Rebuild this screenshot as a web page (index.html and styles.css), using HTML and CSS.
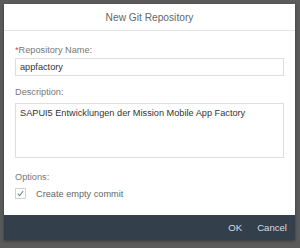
FILE: index.html
```
<!doctype html>
<html>
<head>
<meta charset="utf-8">
<title>New Git Repository</title>
<link rel="stylesheet" href="styles.css">
</head>
<body>
<div class="dialog">
	<div class="header">New Git Repository</div>
	<div class="content">
		<label class="label"><span class="req">*</span>Repository Name:</label>
		<div class="input">appfactory</div>
		<label class="label">Description:</label>
		<div class="textarea">SAPUI5 Entwicklungen der Mission Mobile App Factory</div>
		<label class="label">Options:</label>
		<div class="check">
			<span class="box">
				<svg width="9" height="9" viewBox="0 0 9 9"><path d="M1.8 4.6 L3.6 6.6 L7.2 2" fill="none" stroke="#6f8aa3" stroke-width="1.1"/></svg>
			</span>
			<span>Create empty commit</span>
		</div>
	</div>
	<div class="footer">
		<span class="btn">OK</span>
		<span class="btn">Cancel</span>
	</div>
</div>
</body>
</html>
```
FILE: styles.css
```
html, body{
	margin: 0;
	height: 100%;
}
body{
	background: #5b5b5b;
	padding: 4px 5px 8px 4px;
	box-sizing: border-box;
	font-family: "Liberation Sans", Arial, sans-serif;
}
.dialog{
	width: 291px;
	height: 236px;
	background: #fff;
	display: flex;
	flex-direction: column;
	box-shadow: 0 1px 3px rgba(0,0,0,0.4);
}
.header{
	height: 26px;
	border-bottom: 1px solid #e4e4e4;
	text-align: center;
	line-height: 27px;
	font-size: 10.2px;
	color: #666;
}
.content{
	flex: 1;
	padding: 12px 11px 0 11px;
	display: flex;
	flex-direction: column;
}
.label{
	font-size: 9.2px;
	color: #777;
	line-height: 14px;
}
.req{
	color: #e0422e;
}
.input{
	margin-top: 1px;
	height: 18px;
	box-sizing: border-box;
	border: 1px solid #dedede;
	padding: 0 4px;
	font-size: 9.2px;
	line-height: 16px;
	color: #333;
	margin-bottom: 9px;
}
.textarea{
	margin-top: 4px;
	height: 55px;
	box-sizing: border-box;
	border: 1px solid #dedede;
	padding: 2px 4px;
	font-size: 9.2px;
	line-height: 14px;
	color: #333;
	margin-bottom: 12px;
}
.check{
	margin-top: 4px;
	display: flex;
	align-items: center;
	gap: 10px;
	font-size: 9.2px;
	color: #666;
}
.box{
	width: 11px;
	height: 11px;
	box-sizing: border-box;
	border: 1px solid #d2d2d2;
	display: flex;
	align-items: center;
	justify-content: center;
}
.footer{
	height: 25px;
	background: #333f4b;
	display: flex;
	justify-content: flex-end;
	align-items: center;
	padding-right: 8px;
	gap: 15px;
}
.btn{
	font-size: 9.6px;
	color: #d7dde3;
}
```
